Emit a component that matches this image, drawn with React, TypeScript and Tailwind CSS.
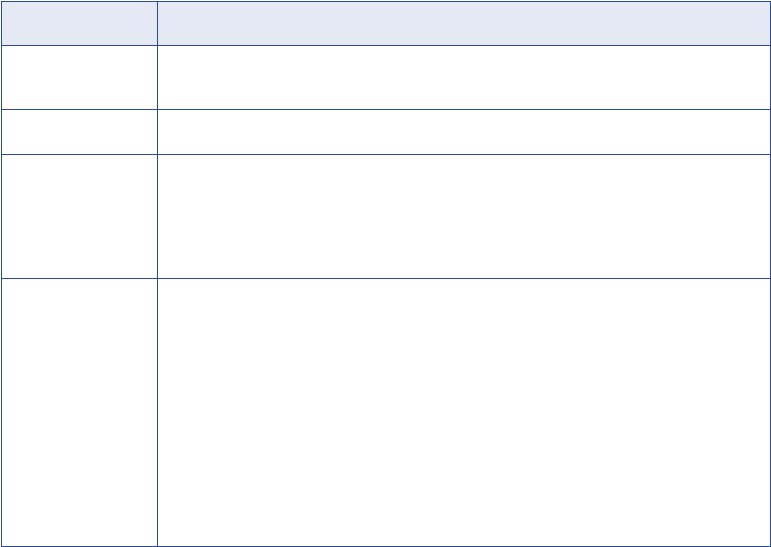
import React from 'react';

const rows = [
  { h: 'h-[64px]' },
  { h: 'h-[45px]' },
  { h: 'h-[124px]' },
  { h: 'h-[268px]' },
];

export default function App() {
  return (
    <div className="w-[771px] h-[547px] bg-white pt-px pl-px font-['Liberation_Sans',sans-serif]">
      <div className="w-[770px] grid grid-cols-[156px_613px] border-l border-t border-[#2a4b9b]">
        <div className="h-[44px] bg-[#e4e9f4] border-r border-b border-[#2a4b9b]" />
        <div className="h-[44px] bg-[#e4e9f4] border-r border-b border-[#2a4b9b]" />
        {rows.map((r, i) => (
          <React.Fragment key={i}>
            <div className={`${r.h} border-r border-b border-[#2a4b9b]`} />
            <div className={`${r.h} border-r border-b border-[#2a4b9b]`} />
          </React.Fragment>
        ))}
      </div>
    </div>
  );
}
